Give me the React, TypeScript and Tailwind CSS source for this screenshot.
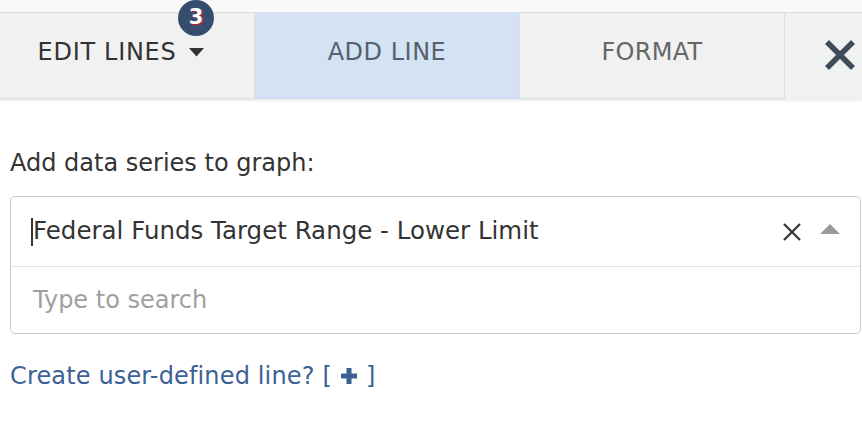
import React from 'react';

const font = { fontFamily: '"DejaVu Sans", Verdana, sans-serif' };

export default function App() {
  return (
    <div className="w-[862px] h-[424px] bg-white overflow-hidden" style={font}>
      {/* Top strip */}
      <div className="h-[12px] bg-[#f9f9f9]" />

      {/* Tabs */}
      <div className="relative flex h-[87px] border-t border-[#dcdcdc] shadow-[0_2px_2px_rgba(0,0,0,0.08)]">
        <div className="relative flex w-[255px] items-center justify-center gap-[13px] border-b border-r border-[#dedede] bg-[#f1f1f1] pb-[8px] text-[24px] tracking-[0.7px] text-[#333]">
          <span>EDIT LINES</span>
          <svg width="15" height="9" viewBox="0 0 15 9" className="mt-[2px] mr-[12px]">
            <path d="M0 0 L15 0 L7.5 8.5 Z" fill="#333" />
          </svg>
          <div className="absolute left-[178px] top-[-13px] flex h-[36px] w-[36px] items-center justify-center rounded-full bg-[#374d6e] text-[21px] font-bold tracking-normal text-white [text-shadow:1px_1px_0_#c0202a]">
            3
          </div>
        </div>
        <div className="flex w-[264px] items-center justify-center border-b border-[#d0dceb] bg-[#d3e3f3] pb-[8px] text-[24px] tracking-[0.5px] text-[#56606e]">
          ADD LINE
        </div>
        <div className="flex w-[266px] items-center justify-center border-b border-l border-r border-[#dedede] bg-[#f1f1f1] pb-[8px] text-[24px] tracking-[0.3px] text-[#666]">
          FORMAT
        </div>
        <div className="flex flex-1 items-center justify-center bg-[#f0f2f2]">
          <svg width="34" height="34" viewBox="0 0 34 34" className="ml-[32px] mt-[-2px]">
            <path d="M4 4 L30 30 M30 4 L4 30" stroke="#3e4b58" strokeWidth="5.5" strokeLinecap="butt" />
          </svg>
        </div>
      </div>

      {/* Body */}
      <div className="pl-[10px] pr-[1px] pt-[51px]">
        <div className="text-[24px] leading-[26px] text-[#333]">Add data series to graph:</div>

        <div className="mt-[20px] rounded-[5px] border border-[#c8c8c8]">
          <div className="flex h-[70px] items-center border-b border-[#e2e2e2] pl-[20px] pr-[20px]">
            <span className="h-[28px] w-[2px] bg-[#333]" />
            <span className="flex-1 text-[24.5px] text-[#333]">Federal Funds Target Range - Lower Limit</span>
            <svg width="20" height="20" viewBox="0 0 20 20" className="mr-[18px]">
              <path d="M2 2 L18 18 M18 2 L2 18" stroke="#333" strokeWidth="2.2" />
            </svg>
            <svg width="20" height="11" viewBox="0 0 20 11" className="mb-[4px]">
              <path d="M0 10 L20 10 L10 0 Z" fill="#999" />
            </svg>
          </div>
          <div className="flex h-[66px] items-center pl-[22px] text-[24px] text-[#a0a0a0]">
            Type to search
          </div>
        </div>

        <div className="mt-[24px] flex items-center text-[24px] text-[#3b6196]">
          <span className="tracking-[0.15px]">Create user-defined line? [</span>
          <svg width="18" height="18" viewBox="0 0 18 18" className="mx-[8px]">
            <path d="M9 1 V17 M1 9 H17" stroke="#3b6196" strokeWidth="5" />
          </svg>
          <span>]</span>
        </div>
      </div>
    </div>
  );
}
